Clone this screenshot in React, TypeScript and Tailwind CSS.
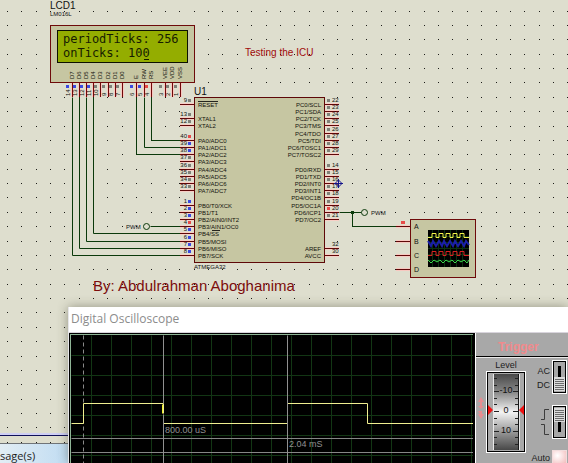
import { useState } from "react";

const SANS = "font-['Liberation_Sans',Arial,sans-serif]";

type Level = "r" | "b" | "g" | "";
const LEVEL_COLOR: Record<string, string> = { r: "#e84a48", b: "#3c48e0", g: "#808078" };

/* [y, pin number, logic level, label] */
type Pin = [number, string, Level, string];

const LEFT_PINS: Pin[] = [
  [104, "9", "g", "RESET"],
  [118, "13", "g", "XTAL1"],
  [125, "12", "g", "XTAL2"],
  [140, "40", "r", "PA0/ADC0"],
  [147, "39", "b", "PA1/ADC1"],
  [154, "38", "b", "PA2/ADC2"],
  [161, "37", "g", "PA3/ADC3"],
  [169, "36", "g", "PA4/ADC4"],
  [176, "35", "g", "PA5/ADC5"],
  [183, "34", "g", "PA6/ADC6"],
  [190, "33", "g", "PA7/ADC7"],
  [205, "1", "b", "PB0/T0/XCK"],
  [212, "2", "b", "PB1/T1"],
  [219, "3", "b", "PB2/AIN0/INT2"],
  [226, "4", "r", "PB3/AIN1/OC0"],
  [233, "5", "b", "PB4/SS"],
  [241, "6", "b", "PB5/MOSI"],
  [248, "7", "b", "PB6/MISO"],
  [255, "8", "b", "PB7/SCK"],
];

const RIGHT_PINS: Pin[] = [
  [104, "22", "g", "PC0/SCL"],
  [111, "23", "g", "PC1/SDA"],
  [118, "24", "g", "PC2/TCK"],
  [125, "25", "g", "PC3/TMS"],
  [133, "26", "g", "PC4/TDO"],
  [140, "27", "g", "PC5/TDI"],
  [147, "28", "g", "PC6/TOSC1"],
  [154, "29", "g", "PC7/TOSC2"],
  [169, "14", "g", "PD0/RXD"],
  [176, "15", "g", "PD1/TXD"],
  [183, "16", "g", "PD2/INT0"],
  [190, "17", "g", "PD3/INT1"],
  [197, "18", "g", "PD4/OC1B"],
  [205, "19", "g", "PD5/OC1A"],
  [212, "20", "r", "PD6/ICP1"],
  [219, "21", "g", "PD7/OC2"],
  [248, "32", "", "AREF"],
  [255, "30", "", "AVCC"],
];

/* [x, pin number, logic level, label] */
const LCD_PINS: Pin[] = [
  [72, "14", "b", "D7"],
  [79, "13", "b", "D6"],
  [86, "12", "b", "D5"],
  [93, "11", "b", "D4"],
  [100, "10", "g", "D3"],
  [108, "9", "g", "D2"],
  [115, "8", "g", "D1"],
  [122, "7", "g", "D0"],
  [136, "6", "b", "E"],
  [144, "5", "b", "RW"],
  [151, "4", "r", "RS"],
  [165, "3", "g", "VEE"],
  [172, "2", "g", "VDD"],
  [180, "1", "g", "VSS"],
];

const WIRES = [
  "M72 97V255H180",
  "M79 97V248H180",
  "M86 97V241H180",
  "M93 97V233H180",
  "M136 97V154H180",
  "M144 97V147H180",
  "M151 97V140H180",
  "M150 226H180",
  "M339 212H361",
  "M352 212V226H396",
];

const SCOPE_PINS: [number, string][] = [
  [226, "A"],
  [241, "B"],
  [255, "C"],
  [269, "D"],
];

function gridDots() {
  const pitch = 14.375;
  let d = "";
  for (let r = -1; r < 120; r++) {
    for (let c = -1; c < 160; c++) {
      d += `M${Math.floor(7.3 + c * pitch)} ${Math.floor(11 + r * pitch)}h1v1h-1z`;
    }
  }
  return d;
}
const DOTS = gridDots();

function Schematic() {
  return (
    <svg className={`absolute inset-0 h-full w-full ${SANS}`} role="img" aria-label="Schematic">
      <path d={DOTS} fill="#1c1c18" />

      {/* wires */}
      <g transform="translate(.5 .5)" fill="none" stroke="#0b3a0b">
        {WIRES.map((d) => (
          <path key={d} d={d} />
        ))}
        <circle cx="146" cy="226" r="3" fill="#dedece" />
        <circle cx="364" cy="212" r="3" fill="#dedece" />
      </g>
      <rect x="351" y="211" width="3" height="3" fill="#0b3a0b" />

      {/* LCD module */}
      <rect x="50.5" y="25.5" width="144" height="57" fill="#c6c6a2" stroke="#6e0a0a" />
      <rect x="57.5" y="30.5" width="130" height="32" fill="#94ad00" stroke="#0c1000" />
      <g fill="#161c00" fontSize="12" fontFamily="'DejaVu Sans Mono', monospace">
        <text x="63" y="43">periodTicks: 256</text>
        <text x="63" y="57">onTicks: 100</text>
        <rect x="144" y="59" width="5" height="1" />
      </g>
      <text x="50" y="9" fontSize="10" fill="#111">LCD1</text>
      <text x="50" y="16" fontSize="6" fill="#111">LM016L</text>
      {LCD_PINS.map(([x, num, level, label]) => (
        <g key={num} fontSize="6" fill="#11110c">
          <rect x={x - 1} y="83" width="3" height="14" fill="#f8c8c0" />
          <rect x={x} y="83" width="1" height="14" fill="#6e0a0a" />
          <rect x={x - 6} y="85" width="3" height="3" fill={LEVEL_COLOR[level]} />
          <text transform={`translate(${x - 2} 96) rotate(-90)`}>{num}</text>
          <text transform={`translate(${x + 2} 79) rotate(-90)`}>{label}</text>
        </g>
      ))}

      {/* microcontroller */}
      <rect x="194.5" y="97.5" width="130" height="165" fill="#c6c6a2" stroke="#5e0808" />
      <text x="194" y="95" fontSize="10" fill="#111">U1</text>
      <text x="194" y="269" fontSize="6" fill="#111">ATMEGA32</text>
      {LEFT_PINS.map(([y, num, level, label]) => (
        <g key={num} fontSize="6" fill="#11110c">
          <rect x="180" y={y - 1} width="14" height="3" fill="#f8cfc6" />
          <rect x="180" y={y} width="14" height="1" fill="#5e0808" />
          <rect x="188" y={y - 5} width="3" height="3" fill={LEVEL_COLOR[level]} />
          <text x="187" y={y - 2} textAnchor="end">{num}</text>
          <text x="198" y={y + 3}>{label}</text>
        </g>
      ))}
      <path d="M198 101.500H218M212 230.500H220" stroke="#24241e" />
      {RIGHT_PINS.map(([y, num, level, label]) => (
        <g key={num} fontSize="6" fill="#11110c">
          <rect x="325" y={y - 1} width="14" height="3" fill="#f8cfc6" />
          <rect x="325" y={y} width="14" height="1" fill="#5e0808" />
          {level && <rect x="327" y={y - 5} width="3" height="3" fill={LEVEL_COLOR[level]} />}
          <text x="332" y={y - 2}>{num}</text>
          <text x="321" y={y + 3} textAnchor="end">{label}</text>
        </g>
      ))}
      <g stroke="#14148c" fill="none">
        <path d="M338.500 179V188M334 183.500H343" />
        <path d="M338.500 180L342 183.500L338.500 187L335 183.500Z" />
      </g>

      <text x="126" y="229" fontSize="6" fill="#111">PWM</text>
      <text x="371" y="215" fontSize="6" fill="#111">PWM</text>

      {/* four channel scope */}
      <rect x="410.500" y="219.500" width="65" height="58" fill="#c6c6a2" stroke="#6e0a0a" />
      {SCOPE_PINS.map(([y, label]) => (
        <g key={label} fontSize="7" fill="#111">
          <rect x="396" y={y - 1} width="14" height="3" fill="#f8c8c0" />
          <rect x="396" y={y} width="14" height="1" fill="#5e0808" />
          <text x="414" y={y + 3}>{label}</text>
        </g>
      ))}
      <rect x="401" y="221" width="4" height="3" fill="#e84a48" />
      <rect x="428" y="230" width="41" height="37" fill="#000" />
      <path
        d="M432.500 230V267M438.500 230V267M444.500 230V267M450.500 230V267M456.500 230V267M462.500 230V267M428 236.500H469M428 242.500H469M428 248.500H469M428 254.500H469M428 260.500H469"
        stroke="#0c3210"
        fill="none"
      />
      <g fill="none">
        <path d="M428 237.500H432V233.500H436V237.500H439V233.500H443V237.500H446V233.500H450V237.500H453V233.500H457V237.500H460V233.500H464V237.500H469" stroke="#f2f24a" />
        <path d="M428 241L431 246L433 241L436 246L439 241L442 246L444 241L447 246L450 241L453 246L455 241L458 246L461 241L464 246L466 241L469 245" stroke="#1a1fa8" strokeWidth="2" />
        <path d="M428 255.500H432V251.500H436V255.500H439V251.500H443V255.500H446V251.500H450V255.500H453V251.500H457V255.500H460V251.500H464V255.500H469" stroke="#d82020" />
        <path d="M428 260L431 263L434 260L437 262L440 260L443 263L446 260L449 262L452 260L455 263L458 260L461 262L464 260L467 263L469 260" stroke="#3cd84c" />
      </g>

      <text x="245" y="56" fontSize="10" fill="#a00c0c">Testing the ICU</text>
      <text x="93" y="291" fontSize="15" fill="#7c0c0c">By: Abdulrahman Aboghanima</text>
    </svg>
  );
}

function gridPath() {
  let d = "";
  for (let v = 20; v <= 400; v += 20) d += `M${v} 0V2000M0 ${v}H402`;
  return d;
}
const PLOT_GRID = gridPath();

function Plot() {
  return (
    <div className="w-[404px] border-t border-l border-black bg-black pl-px pt-px shadow-[inset_1px_1px_0_#8fb596]">
      <svg className={`block h-full w-full ${SANS}`} role="img" aria-label="Oscilloscope trace">
        <g transform="translate(.5 .5)" fill="none">
          <path d={PLOT_GRID} stroke="#123614" />
          <path d="M12 0V2000" stroke="#8a8a8a" strokeDasharray="4 3" />
          <path d="M0 103H402M0 117H402" stroke="#868686" />
          <path d="M0 88H12V68H92V78M92 88H216V68H296V88H402" stroke="#f0ee90" />
          <path d="M92 0V68M92 79V2000M216 0V2000" stroke="#909090" />
          <path d="M91 69V78" stroke="#eeee30" />
        </g>
        <g fill="#909090" fontSize="9">
          <text x="94" y="98">800.00 uS</text>
          <text x="218" y="112">2.04 mS</text>
        </g>
      </svg>
    </div>
  );
}

function LevelDial() {
  const [value, setValue] = useState(0);
  const ticks = Array.from({ length: 11 }, (_, i) => 5 + i * 6 + Math.round(i * 0.6));
  return (
    <div className="flex flex-col items-center">
      <label htmlFor="level" className="text-[9px] leading-[12px] text-[#1c1c1c]">
        Level
      </label>
      <div className="relative h-[82px] w-[40px] border border-white bg-black p-px">
        <svg className="block h-full w-full bg-[#a8a8a8]" viewBox="0 0 36 78" aria-hidden="true">
          <defs>
            <linearGradient id="drum" x1="0" y1="0" x2="0" y2="1">
              <stop offset="0" stopColor="#484848" />
              <stop offset=".25" stopColor="#8c8c8c" />
              <stop offset=".5" stopColor="#f4f4f4" />
              <stop offset=".75" stopColor="#9c9c9c" />
              <stop offset="1" stopColor="#484848" />
            </linearGradient>
          </defs>
          <rect x="5" y="1" width="1" height="76" fill="#e8e8e8" />
          <rect x="6" y="1" width="24" height="76" fill="url(#drum)" />
          <rect x="30" y="1" width="1" height="76" fill="#1a1a1a" />
          <rect x="31" y="1" width="1" height="76" fill="#e8e8e8" />
          {ticks.map((y, i) => (
            <path key={y} d={`M6 ${y}.5h${i % 3 === 2 ? 5 : 3}M30 ${y}.5h${i % 3 === 2 ? -5 : -3}`} stroke="#222" />
          ))}
          <g fontSize="9" fill="#111" textAnchor="middle">
            <text x="18" y="20">-10</text>
            <text x="18" y="40">0</text>
            <text x="18" y="60">10</text>
          </g>
          <path d="M0 32L5 37L0 42ZM36 32L31 37L36 42Z" fill="#f01010" />
        </svg>
        <input
          id="level"
          type="range"
          min={-20}
          max={20}
          value={value}
          onChange={(e) => setValue(Number(e.target.value))}
          className="absolute inset-0 h-full w-full opacity-0"
        />
      </div>
    </div>
  );
}

function SlideSwitch({ label, down }: { label: string; down: boolean }) {
  const [low, setLow] = useState(down);
  const y = low ? 15 : 1;
  return (
    <button
      type="button"
      role="switch"
      aria-checked={low}
      aria-label={label}
      onClick={() => setLow(!low)}
      className="h-[34px] w-[15px] border border-white bg-black p-px"
    >
      <svg className="block bg-[#a8a8a8]" width="11" height="30" aria-hidden="true">
        <rect x="4" y="4" width="3" height="21" fill="#000" />
        <rect x="0" y={y} width="11" height="14" fill="#dcdcdc" />
        <path
          d={`M1 ${y + 2}.5h9M1 ${y + 4}.5h9M1 ${y + 6}.5h9M1 ${y + 8}.5h9M1 ${y + 10}.5h9M1 ${y + 12}.5h9`}
          stroke="#6c6c6c"
        />
      </svg>
    </button>
  );
}

function TriggerPanel() {
  return (
    <section className="flex min-w-0 flex-1 flex-col border-l border-white bg-[#a8a8a8]">
      <h2 className="h-[26px] border-b border-black pl-[22px] pt-[5px] text-[12px] leading-[18px] font-bold text-[#f08a8c]">
        Trigger
      </h2>
      <div className="flex border-t border-[#e8e8e8] pt-px pl-px">
        <svg className="mt-[38px] shrink-0" width="9" height="24" aria-hidden="true">
          <path d="M4 0L7 5H5V9H7L4 12L1 9H3V5H1ZM4 22L7 17H5V14H1L3 17H1Z" fill="#e88c90" />
        </svg>
        <LevelDial />
        <div className="flex flex-1 flex-col items-end gap-[11px] pt-px pr-px">
          <div className="flex gap-[2px]">
            <div className="pt-[4px] text-right text-[9px] leading-[14px] text-[#1c1c1c]">
              <div>AC</div>
              <div>DC</div>
            </div>
            <SlideSwitch label="Coupling" down />
          </div>
          <div className="flex gap-[3px]">
            <svg className="mt-[3px]" width="8" height="28" fill="none" stroke="#3c3c3c" aria-hidden="true">
              <path d="M0 11.500H3.500V1.500H8M0 16.500H3.500V26.500H8" />
            </svg>
            <SlideSwitch label="Edge" down={false} />
          </div>
          <div className="flex gap-[2px]">
            <label htmlFor="auto" className="pt-[2px] text-[9px] leading-[12px] text-[#1c1c1c]">
              Auto
            </label>
            <button
              id="auto"
              type="button"
              className="h-[15px] w-[15px] border border-[#f0dcdc] bg-radial-[at_35%_35%] from-white to-[#f2b8b8]"
            />
          </div>
        </div>
      </div>
    </section>
  );
}

export default function App() {
  return (
    <main className={`relative h-screen overflow-hidden bg-[#dedece] ${SANS}`}>
      <Schematic />

      {/* message log, docked below the sheet border */}
      <div className="absolute inset-x-0 top-[433px] bottom-0 flex flex-col">
        <div className="h-[2px] bg-[#cfcff4]" />
        <div className="h-px bg-[#101058]" />
        <div className="h-[7px]" />
        <div className="flex-1 border-t border-[#707478] bg-linear-to-r from-[#e2edf4] to-[#c0dcf2] to-[68px] pt-[5px] font-['Open_Sans','Noto_Sans',sans-serif] text-[11px] leading-[14px] text-[#1c1c1c]">
          sage(s)
        </div>
      </div>

      <section className="absolute top-[307px] right-0 bottom-0 left-[68px] flex flex-col border-l border-[#e6e6ea] bg-[#a8a8a8] shadow-[0_0_10px_rgba(60,60,40,0.45)]">
        <h1 className="h-[26px] shrink-0 border-b border-[#d8d4dc] bg-white pl-[2px] font-['Open_Sans','Noto_Sans',sans-serif] text-[12px] leading-[24px] text-[#8c8c8c]">
          Digital Oscilloscope
        </h1>
        <div className="flex min-h-0 flex-1">
          <Plot />
          <div className="w-[2px] bg-black" />
          <TriggerPanel />
        </div>
      </section>
    </main>
  );
}
